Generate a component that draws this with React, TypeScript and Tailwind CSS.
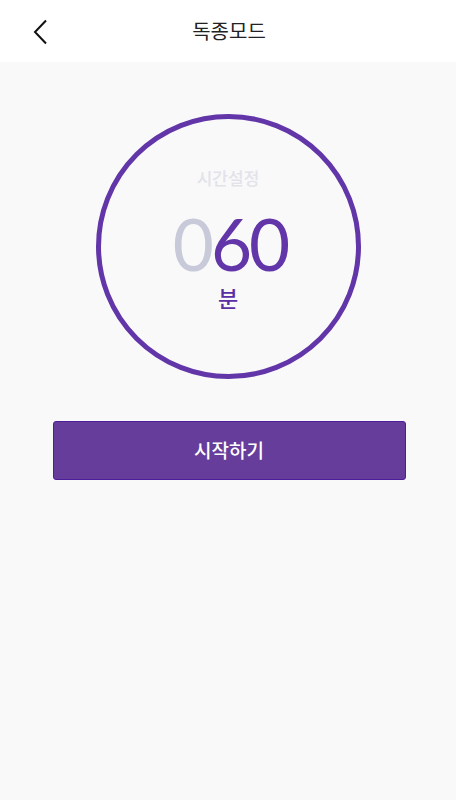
import React from "react";

export default function App() {
  return (
    <div
      className="w-[456px] h-[800px] bg-[#f9f9f9] flex flex-col"
      style={{ fontFamily: '"Noto Sans CJK KR", "Noto Sans", sans-serif' }}
    >
      <header className="h-[62px] bg-white flex items-center relative shrink-0">
        <button className="absolute left-[30px] top-[18px] w-[20px] h-[28px] flex items-center justify-center">
          <svg width="16" height="26" viewBox="0 0 16 26" fill="none">
            <path d="M14 1.5 L3 13 L14 24.5" stroke="#111" strokeWidth="2" strokeLinecap="butt" />
          </svg>
        </button>
        <h1 className="flex-1 text-center text-[20px] text-[#222] leading-none pl-[2px]">독종모드</h1>
      </header>
      <main className="flex flex-col items-center pt-[52px]">
        <div className="w-[265px] h-[265px] rounded-full border-[5px] border-[#6236a8] flex flex-col items-center">
          <div className="mt-[47px] text-[17px] leading-[24px] text-[#e2e2ea] font-medium">시간설정</div>
          <div
            className="mt-[25px] text-[71px] leading-[58px] tracking-[-3px] pl-[4px]"
            style={{ fontFamily: 'Lato, "Open Sans", sans-serif', fontWeight: 400 }}
          >
            <span className="text-[#c8cad9]">0</span>
            <span className="text-[#6236a8]">60</span>
          </div>
          <div className="mt-[10px] text-[22px] leading-[28px] text-[#5b2ea6] font-medium">분</div>
        </div>
        <button className="mt-[42px] w-[353px] h-[59px] ml-[2px] bg-[#673d9b] border border-[#4e1d9a] rounded-[3px] text-white text-[19px] font-medium">
          시작하기
        </button>
      </main>
    </div>
  );
}
